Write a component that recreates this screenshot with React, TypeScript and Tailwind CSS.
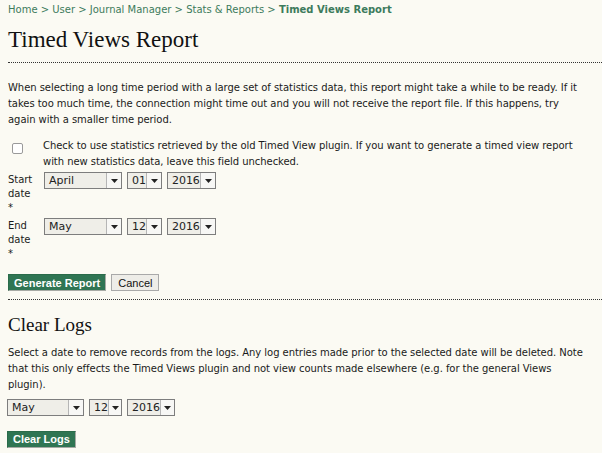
import React from 'react'

const bodyFont = "font-['DejaVu_Sans',Verdana,sans-serif]"
const headFont = "font-['Liberation_Serif',Georgia,serif]"

function FakeSelect({ value, width }: { value: string; width: string }) {
  return (
    <div className={`flex h-[17px] ${width} border border-[#7d7d7d] bg-[#efeee8]`}>
      <div className="flex-1 pl-[4px] text-[11px] leading-[15px] text-[#222]">{value}</div>
      <div className="flex w-[15px] items-center justify-center border-l border-[#b5b5b5] bg-[#f7f7f5]">
        <svg width="7" height="4" viewBox="0 0 7 4">
          <path d="M0 0h7L3.5 4z" fill="#222" />
        </svg>
      </div>
    </div>
  )
}

function DateRow({ month, day, year, small }: { month: string; day: string; year: string; small?: boolean }) {
  return (
    <div className="flex gap-[5px]">
      <FakeSelect value={month} width={small ? 'w-[77px]' : 'w-[78px]'} />
      <FakeSelect value={day} width={small ? 'w-[33px]' : 'w-[35px]'} />
      <FakeSelect value={year} width={small ? 'w-[48px]' : 'w-[49px]'} />
    </div>
  )
}

function GreenButton({ children }: { children: React.ReactNode }) {
  return (
    <button className="h-[17px] border border-[#2a6b4a] border-r-[#a7aaa5] border-b-[#a7aaa5] bg-[#2f7553] px-[5px] font-['Liberation_Sans',Arial,sans-serif] text-[11px] font-bold leading-[14px] text-white">
      {children}
    </button>
  )
}

export default function App() {
  return (
    <div className={`min-h-[453px] w-[602px] overflow-hidden bg-[#fbfaf3] pl-[8px] text-[#1a1a1a] ${bodyFont}`}>
      {/* breadcrumb */}
      <div className="pt-[3px] text-[10px] leading-[14px] text-[#3d7b5c]">
        Home &gt; User &gt; Journal Manager &gt; Stats &amp; Reports &gt; <span className="font-bold">Timed Views Report</span>
      </div>

      <h2 className={`mt-[10px] text-[23px] leading-[26px] text-[#111] ${headFont}`}>Timed Views Report</h2>
      <div className="mt-[9px] border-b border-dotted border-[#333]" />

      <p className="mt-[17px] whitespace-nowrap text-[10px] leading-[16px] tracking-[-0.05px]">
        When selecting a long time period with a large set of statistics data, this report might take a while to be ready. If it
        <br />
        takes too much time, the connection might time out and you will not receive the report file. If this happens, try
        <br />
        again with a smaller time period.
      </p>

      <table className="mt-[10px] border-collapse text-[10px] tracking-[-0.05px]">
        <tbody>
          <tr>
            <td className="w-[35px] align-top">
              <div className="ml-[4px] mt-[5px] h-[11px] w-[11px] rounded-[2px] border border-[#9a9a9a] bg-white" />
            </td>
            <td className="whitespace-nowrap align-top leading-[16px]">
              Check to use statistics retrieved by the old Timed View plugin. If you want to generate a timed view report
              <br />
              with new statistics data, leave this field unchecked.
            </td>
          </tr>
          <tr>
            <td className="pt-[3px] align-top leading-[14px]">
              Start
              <br />
              date
              <br />*
            </td>
            <td className="pl-[1px] pt-[2px] align-top">
              <DateRow month="April" day="01" year="2016" />
            </td>
          </tr>
          <tr>
            <td className="pt-[4px] align-top leading-[14px]">
              End
              <br />
              date
              <br />*
            </td>
            <td className="pl-[1px] pt-[3px] align-top">
              <DateRow month="May" day="12" year="2016" />
            </td>
          </tr>
        </tbody>
      </table>

      <div className="mt-[13px] flex gap-[5px]">
        <GreenButton>Generate Report</GreenButton>
        <button className="h-[17px] border border-[#a9a9a9] bg-[#eeede8] px-[6px] font-['Liberation_Sans',Arial,sans-serif] text-[11px] leading-[14px] text-[#111]">
          Cancel
        </button>
      </div>

      <div className="mt-[8px] border-b border-dotted border-[#333]" />

      <h3 className={`mt-[13px] text-[19px] leading-[24px] text-[#111] ${headFont}`}>Clear Logs</h3>

      <p className="mt-[8px] whitespace-nowrap text-[10px] leading-[16px] tracking-[-0.05px]">
        Select a date to remove records from the logs. Any log entries made prior to the selected date will be deleted. Note
        <br />
        that this only effects the Timed Views plugin and not view counts made elsewhere (e.g. for the general Views
        <br />
        plugin).
      </p>

      <div className="-ml-[1px] mt-[6px]">
        <DateRow month="May" day="12" year="2016" small />
      </div>

      <div className="-ml-[1px] mt-[10px]">
        <GreenButton>Clear Logs</GreenButton>
      </div>
    </div>
  )
}
